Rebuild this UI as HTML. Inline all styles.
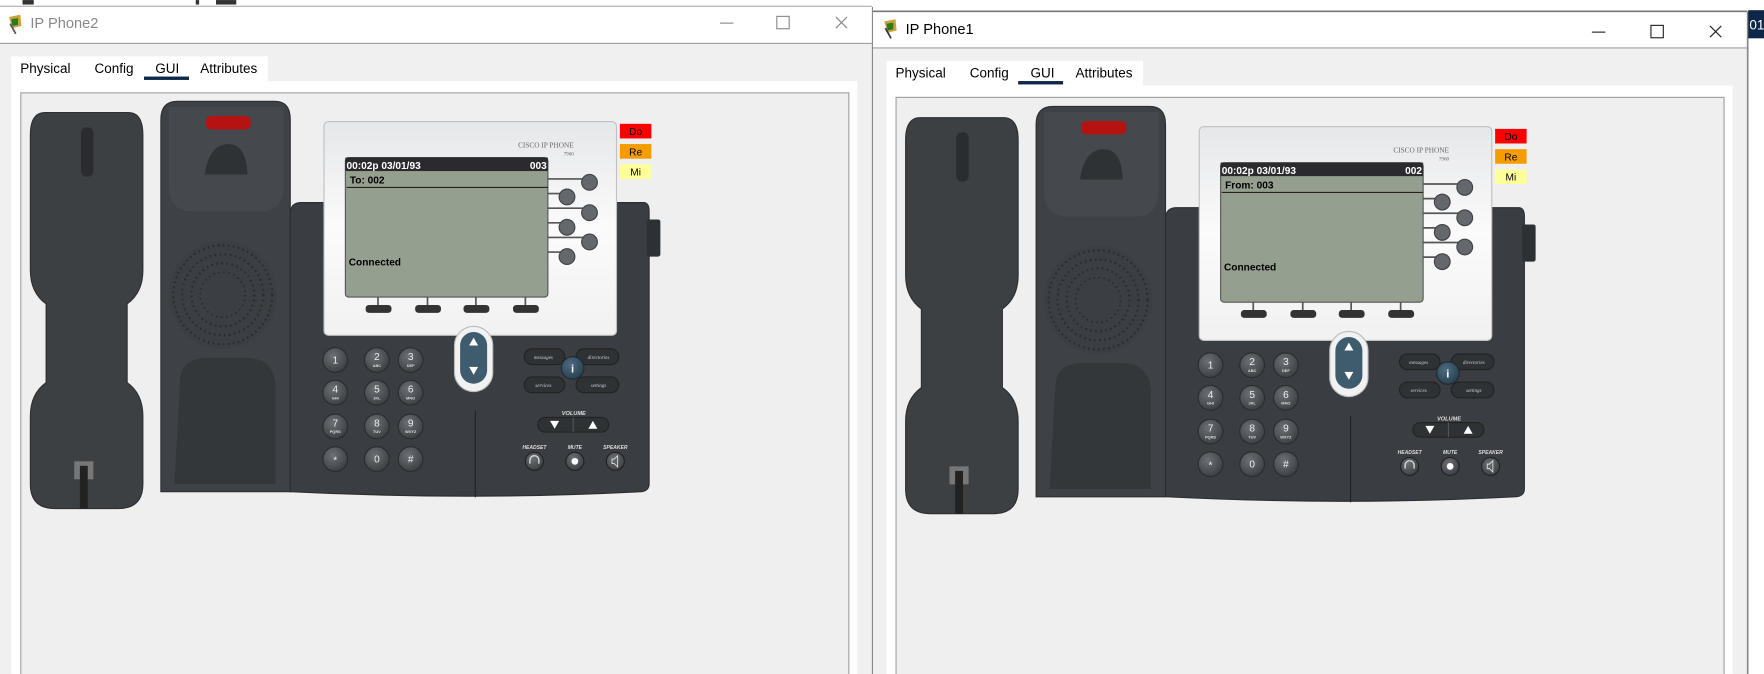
<!DOCTYPE html>
<html><head><meta charset="utf-8"><style>
html,body{margin:0;padding:0;background:#fff;overflow:hidden}
svg{display:block;font-family:"Liberation Sans",sans-serif}
.sf{font-family:"Liberation Serif",serif}
</style></head><body>
<svg width="1764" height="674" viewBox="0 0 1568 599" xmlns="http://www.w3.org/2000/svg">
<defs>
<linearGradient id="bz" x1="0" y1="0" x2="0" y2="1"><stop offset="0" stop-color="#e6e7e9"/><stop offset="0.5" stop-color="#fbfbfb"/><stop offset="1" stop-color="#f1f1f1"/></linearGradient>
<radialGradient id="kb" cx="0.4" cy="0.35" r="0.7"><stop offset="0" stop-color="#6c7075"/><stop offset="1" stop-color="#3a3d41"/></radialGradient>
<radialGradient id="ib" cx="0.4" cy="0.35" r="0.7"><stop offset="0" stop-color="#4d6a80"/><stop offset="1" stop-color="#27404f"/></radialGradient>
</defs>
<rect width="1568" height="599" fill="#fff"/>
<rect x="20" y="0" width="10" height="4" fill="#333"/><rect x="174" y="0" width="3" height="4" fill="#333"/><rect x="192" y="0" width="18" height="4" fill="#333"/>
<line x1="0" y1="5.5" x2="775" y2="5.5" stroke="#999"/>
<!-- LEFT WINDOW -->
<rect x="0" y="6" width="775" height="593" fill="#f0f0f0"/>
<rect x="0" y="6" width="775" height="32" fill="#fff"/>
<line x1="0" y1="38.5" x2="775" y2="38.5" stroke="#a0a0a0"/>
<g transform="translate(6,13)"><path d="M2 2 L12 0 L13 10 L5 12 Z" fill="#c9a23a"/><path d="M4 4 L10 3 L10 9 L5 10Z" fill="#2a7a20"/><path d="M3 8 L8 17" stroke="#555" stroke-width="1.5"/></g>
<text x="27" y="25" font-size="13" fill="#888">IP Phone2</text>
<line x1="640" y1="20.5" x2="652" y2="20.5" stroke="#888"/>
<rect x="690.5" y="14.5" width="11" height="11" fill="none" stroke="#888"/>
<path d="M743 15 L753 25 M753 15 L743 25" stroke="#888" stroke-width="1"/>
<rect x="10" y="50" width="228" height="23" fill="#fff"/>
<rect x="10" y="72" width="752" height="527" fill="#fff"/>
<rect x="18.5" y="82.5" width="736" height="520" fill="#efefef" stroke="#a0a0a0"/>
<g font-size="12" fill="#000"><text x="18" y="65">Physical</text><text x="84" y="65">Config</text><text x="138" y="65">GUI</text><text x="178" y="65">Attributes</text></g>
<rect x="128" y="68" width="40" height="3" fill="#0e2748"/>
<line x1="775.5" y1="6" x2="775.5" y2="599" stroke="#888"/>

<!-- RIGHT WINDOW -->
<rect x="776" y="10" width="777" height="589" fill="#f0f0f0"/>
<line x1="776" y1="10" x2="1553" y2="10" stroke="#777" stroke-width="1.5"/>
<rect x="776" y="11" width="777" height="31" fill="#fff"/>
<line x1="776" y1="42.5" x2="1553" y2="42.5" stroke="#a0a0a0"/>
<g transform="translate(784,17)"><path d="M2 2 L12 0 L13 10 L5 12 Z" fill="#c9a23a"/><path d="M4 4 L10 3 L10 9 L5 10Z" fill="#2a7a20"/><path d="M3 8 L8 17" stroke="#333" stroke-width="1.5"/></g>
<text x="805" y="30" font-size="13" fill="#000">IP Phone1</text>
<line x1="1415" y1="28.5" x2="1427" y2="28.5" stroke="#222"/>
<rect x="1467.5" y="22.5" width="11" height="11" fill="none" stroke="#222"/>
<path d="M1520 23 L1530 33 M1530 23 L1520 33" stroke="#222" stroke-width="1"/>
<rect x="788" y="54" width="228" height="23" fill="#fff"/>
<rect x="788" y="76" width="752" height="523" fill="#fff"/>
<rect x="796.5" y="86.5" width="736" height="520" fill="#efefef" stroke="#a0a0a0"/>
<g font-size="12" fill="#000"><text x="796" y="69">Physical</text><text x="862" y="69">Config</text><text x="916" y="69">GUI</text><text x="956" y="69">Attributes</text></g>
<rect x="905" y="72" width="40" height="3" fill="#0e2748"/>
<line x1="1553.5" y1="10" x2="1553.5" y2="599" stroke="#888" stroke-width="1.5"/>
<rect x="1554" y="9" width="14" height="25" fill="#0e2748"/>
<text x="1555" y="26" font-size="12" fill="#fff">01</text>

<!-- PHONE LEFT -->
<g>
<path d="M40 100 H114 Q127 100 127 120 V240 Q127 260 113 270 V340 Q127 350 127 370 V430 Q127 452 105 452 H49 Q27 452 27 430 V370 Q27 350 41 340 V270 Q27 260 27 240 V120 Q27 100 40 100Z" fill="#3d4043" stroke="#2c2e31"/>
<rect x="72" y="113" width="11" height="44" rx="5" fill="#2a2c2f"/>
<rect x="66" y="410" width="17" height="16" fill="#777"/><rect x="71" y="414" width="7" height="38" fill="#222"/>
<path d="M158 90 H244 Q258 90 258 106 V437 H143 V106 Q143 90 158 90Z" fill="#3e4145" stroke="#2c2e31"/>
<path d="M150 95 H252 V165 Q252 188 230 188 H172 Q150 188 150 165Z" fill="#45484c"/>
<rect x="183" y="103" width="40" height="12" rx="5" fill="#b51212"/>
<path d="M182 155 Q186 128 203 128 Q219 128 220 155 Z" fill="#2f3235"/>
<circle cx="198" cy="262" r="48" fill="#3b3e42"/>
<circle cx="198" cy="262" r="44" fill="none" stroke="#2a2c2f" stroke-width="2" stroke-dasharray="1.5 3"/>
<circle cx="198" cy="262" r="36" fill="none" stroke="#2a2c2f" stroke-width="2" stroke-dasharray="1.5 3"/>
<circle cx="198" cy="262" r="28" fill="none" stroke="#2a2c2f" stroke-width="2" stroke-dasharray="1.5 3"/>
<circle cx="198" cy="262" r="20" fill="none" stroke="#2a2c2f" stroke-width="1.5" stroke-dasharray="1.5 3"/>
<path d="M160 340 Q160 318 185 318 H218 Q245 318 245 345 V430 H155 Z" fill="#34373a"/>
<path d="M268 180 H572 Q577 180 577 188 V430 Q577 436 570 437 Q420 445 258 437 V190 Q258 180 268 180Z" fill="#3a3d41" stroke="#2b2d30"/>
<rect x="575" y="195" width="12" height="33" rx="2" fill="#2e3134"/>
<line x1="422.5" y1="365" x2="422.5" y2="442" stroke="#222"/>
<rect x="288" y="108" width="260" height="190" rx="4" fill="url(#bz)" stroke="#c0c0c0"/>
<text x="510" y="131" font-size="6.5" fill="#666" text-anchor="end" class="sf">CISCO IP PHONE</text>
<text x="510" y="138" font-size="4.5" fill="#666" text-anchor="end" class="sf">7960</text>
<rect x="307" y="140" width="180" height="124" rx="3" fill="#959f90" stroke="#555"/>
<rect x="307" y="140" width="180" height="12" fill="#2b2a2e"/>
<line x1="308" y1="166.5" x2="487" y2="166.5" stroke="#222"/>
<g stroke="#555" stroke-width="1.5">
<line x1="487" y1="159" x2="524" y2="159"/><line x1="487" y1="172" x2="504" y2="172"/><line x1="487" y1="185" x2="524" y2="185"/><line x1="487" y1="198" x2="504" y2="198"/><line x1="487" y1="211" x2="524" y2="211"/><line x1="487" y1="224" x2="504" y2="224"/>
<line x1="336" y1="264" x2="336" y2="274"/><line x1="380" y1="264" x2="380" y2="274"/><line x1="423" y1="264" x2="423" y2="274"/><line x1="467" y1="264" x2="467" y2="274"/>
</g>
<g fill="#64676c" stroke="#404245">
<circle cx="524" cy="162" r="7"/><circle cx="504" cy="175" r="7"/><circle cx="524" cy="189" r="7"/><circle cx="504" cy="202" r="7"/><circle cx="524" cy="215" r="7"/><circle cx="504" cy="228" r="7"/>
</g>
<g fill="#333"><rect x="325" y="271" width="23" height="7" rx="3"/><rect x="369" y="271" width="23" height="7" rx="3"/><rect x="412" y="271" width="23" height="7" rx="3"/><rect x="456" y="271" width="23" height="7" rx="3"/></g>
<rect x="551" y="110" width="28" height="13" fill="#ff0000"/><text x="565" y="120" font-size="9" text-anchor="middle">Do</text>
<rect x="551" y="128" width="28" height="13" fill="#f59c00"/><text x="565" y="138" font-size="9" text-anchor="middle">Re</text>
<rect x="551" y="146" width="28" height="13" fill="#ffff99"/><text x="565" y="156" font-size="9" text-anchor="middle">Mi</text>
<rect x="404" y="290" width="34" height="58" rx="17" fill="#f2f2f2" stroke="#bbb"/>
<rect x="409" y="295" width="24" height="46" rx="12" fill="#3f5b6e"/>
<path d="M421 300 L425 307 H417Z M421 333 L425 326 H417Z" fill="#fff"/>
<g fill="url(#kb)" stroke="#2a2c2f">
<circle cx="298" cy="320" r="11"/><circle cx="335" cy="320" r="11"/><circle cx="365" cy="320" r="11"/>
<circle cx="298" cy="349" r="11"/><circle cx="335" cy="349" r="11"/><circle cx="365" cy="349" r="11"/>
<circle cx="298" cy="379" r="11"/><circle cx="335" cy="379" r="11"/><circle cx="365" cy="379" r="11"/>
<circle cx="298" cy="408" r="11"/><circle cx="335" cy="408" r="11"/><circle cx="365" cy="408" r="11"/>
</g>
<g fill="#eee" font-size="9" text-anchor="middle">
<text x="298" y="323">1</text><text x="335" y="320">2</text><text x="365" y="320">3</text>
<text x="298" y="349">4</text><text x="335" y="349">5</text><text x="365" y="349">6</text>
<text x="298" y="379">7</text><text x="335" y="379">8</text><text x="365" y="379">9</text>
<text x="298" y="412">*</text><text x="335" y="411">0</text><text x="365" y="411">#</text>
</g>
<g fill="#ddd" font-size="3.5" text-anchor="middle" font-weight="bold">
<text x="335" y="326">ABC</text><text x="365" y="326">DEF</text><text x="298" y="355">GHI</text><text x="335" y="355">JKL</text><text x="365" y="355">MNO</text><text x="298" y="385">PQRS</text><text x="335" y="385">TUV</text><text x="365" y="385">WXYZ</text>
</g>
<g fill="#2f3235" stroke="#222"><rect x="466" y="310" width="36" height="14" rx="7"/><rect x="512" y="310" width="38" height="14" rx="7"/><rect x="466" y="335" width="36" height="14" rx="7"/><rect x="512" y="335" width="38" height="14" rx="7"/></g>
<g fill="#ccc" font-size="4.5" font-style="italic" text-anchor="middle" class="sf"><text x="483" y="319">messages</text><text x="532" y="319">directories</text><text x="483" y="344">services</text><text x="532" y="344">settings</text></g>
<circle cx="509" cy="327" r="10" fill="url(#ib)" stroke="#1f2a33"/><text x="509" y="331" font-size="10" fill="#fff" text-anchor="middle" font-weight="bold">i</text>
<text x="510" y="369" font-size="5" fill="#ddd" text-anchor="middle" font-style="italic" font-weight="bold">VOLUME</text>
<rect x="478" y="371" width="63" height="13" rx="6.5" fill="#2f3235" stroke="#222"/><line x1="509.5" y1="371" x2="509.5" y2="384" stroke="#555"/>
<path d="M489 374 L497 374 L493 381Z M523 381 L531 381 L527 374Z" fill="#fff"/>
<g fill="#ddd" font-size="4.5" text-anchor="middle" font-style="italic" font-weight="bold"><text x="475" y="399">HEADSET</text><text x="511" y="399">MUTE</text><text x="547" y="399">SPEAKER</text></g>
<g fill="url(#kb)" stroke="#222"><circle cx="475" cy="410" r="8"/><circle cx="511" cy="410" r="8"/><circle cx="547" cy="410" r="8"/></g>
<circle cx="511" cy="410" r="3" fill="#fff"/>
<path d="M471 412 V409 A4 4 0 0 1 479 409 V412" fill="none" stroke="#ddd" stroke-width="1.2"/>
<path d="M544 408 H546 L549 405 V415 L546 412 H544Z" fill="none" stroke="#ddd" stroke-width="0.8"/>
<g fill="#fff" font-size="9" font-weight="bold">
<text x="308" y="150">00:02p 03/01/93</text><text x="486" y="150" text-anchor="end">003</text>
</g>
<text x="311" y="163" font-size="9" font-weight="bold">To: 002</text>
<text x="310" y="236" font-size="9" font-weight="bold">Connected</text>
</g>

<!-- PHONE RIGHT -->
<g transform="translate(778,4.5)">
<path d="M40 100 H114 Q127 100 127 120 V240 Q127 260 113 270 V340 Q127 350 127 370 V430 Q127 452 105 452 H49 Q27 452 27 430 V370 Q27 350 41 340 V270 Q27 260 27 240 V120 Q27 100 40 100Z" fill="#3d4043" stroke="#2c2e31"/>
<rect x="72" y="113" width="11" height="44" rx="5" fill="#2a2c2f"/>
<rect x="66" y="410" width="17" height="16" fill="#777"/><rect x="71" y="414" width="7" height="38" fill="#222"/>
<path d="M158 90 H244 Q258 90 258 106 V437 H143 V106 Q143 90 158 90Z" fill="#3e4145" stroke="#2c2e31"/>
<path d="M150 95 H252 V165 Q252 188 230 188 H172 Q150 188 150 165Z" fill="#45484c"/>
<rect x="183" y="103" width="40" height="12" rx="5" fill="#b51212"/>
<path d="M182 155 Q186 128 203 128 Q219 128 220 155 Z" fill="#2f3235"/>
<circle cx="198" cy="262" r="48" fill="#3b3e42"/>
<circle cx="198" cy="262" r="44" fill="none" stroke="#2a2c2f" stroke-width="2" stroke-dasharray="1.5 3"/>
<circle cx="198" cy="262" r="36" fill="none" stroke="#2a2c2f" stroke-width="2" stroke-dasharray="1.5 3"/>
<circle cx="198" cy="262" r="28" fill="none" stroke="#2a2c2f" stroke-width="2" stroke-dasharray="1.5 3"/>
<circle cx="198" cy="262" r="20" fill="none" stroke="#2a2c2f" stroke-width="1.5" stroke-dasharray="1.5 3"/>
<path d="M160 340 Q160 318 185 318 H218 Q245 318 245 345 V430 H155 Z" fill="#34373a"/>
<path d="M268 180 H572 Q577 180 577 188 V430 Q577 436 570 437 Q420 445 258 437 V190 Q258 180 268 180Z" fill="#3a3d41" stroke="#2b2d30"/>
<rect x="575" y="195" width="12" height="33" rx="2" fill="#2e3134"/>
<line x1="422.5" y1="365" x2="422.5" y2="442" stroke="#222"/>
<rect x="288" y="108" width="260" height="190" rx="4" fill="url(#bz)" stroke="#c0c0c0"/>
<text x="510" y="131" font-size="6.5" fill="#666" text-anchor="end" class="sf">CISCO IP PHONE</text>
<text x="510" y="138" font-size="4.5" fill="#666" text-anchor="end" class="sf">7960</text>
<rect x="307" y="140" width="180" height="124" rx="3" fill="#959f90" stroke="#555"/>
<rect x="307" y="140" width="180" height="12" fill="#2b2a2e"/>
<line x1="308" y1="166.5" x2="487" y2="166.5" stroke="#222"/>
<g stroke="#555" stroke-width="1.5">
<line x1="487" y1="159" x2="524" y2="159"/><line x1="487" y1="172" x2="504" y2="172"/><line x1="487" y1="185" x2="524" y2="185"/><line x1="487" y1="198" x2="504" y2="198"/><line x1="487" y1="211" x2="524" y2="211"/><line x1="487" y1="224" x2="504" y2="224"/>
<line x1="336" y1="264" x2="336" y2="274"/><line x1="380" y1="264" x2="380" y2="274"/><line x1="423" y1="264" x2="423" y2="274"/><line x1="467" y1="264" x2="467" y2="274"/>
</g>
<g fill="#64676c" stroke="#404245">
<circle cx="524" cy="162" r="7"/><circle cx="504" cy="175" r="7"/><circle cx="524" cy="189" r="7"/><circle cx="504" cy="202" r="7"/><circle cx="524" cy="215" r="7"/><circle cx="504" cy="228" r="7"/>
</g>
<g fill="#333"><rect x="325" y="271" width="23" height="7" rx="3"/><rect x="369" y="271" width="23" height="7" rx="3"/><rect x="412" y="271" width="23" height="7" rx="3"/><rect x="456" y="271" width="23" height="7" rx="3"/></g>
<rect x="551" y="110" width="28" height="13" fill="#ff0000"/><text x="565" y="120" font-size="9" text-anchor="middle">Do</text>
<rect x="551" y="128" width="28" height="13" fill="#f59c00"/><text x="565" y="138" font-size="9" text-anchor="middle">Re</text>
<rect x="551" y="146" width="28" height="13" fill="#ffff99"/><text x="565" y="156" font-size="9" text-anchor="middle">Mi</text>
<rect x="404" y="290" width="34" height="58" rx="17" fill="#f2f2f2" stroke="#bbb"/>
<rect x="409" y="295" width="24" height="46" rx="12" fill="#3f5b6e"/>
<path d="M421 300 L425 307 H417Z M421 333 L425 326 H417Z" fill="#fff"/>
<g fill="url(#kb)" stroke="#2a2c2f">
<circle cx="298" cy="320" r="11"/><circle cx="335" cy="320" r="11"/><circle cx="365" cy="320" r="11"/>
<circle cx="298" cy="349" r="11"/><circle cx="335" cy="349" r="11"/><circle cx="365" cy="349" r="11"/>
<circle cx="298" cy="379" r="11"/><circle cx="335" cy="379" r="11"/><circle cx="365" cy="379" r="11"/>
<circle cx="298" cy="408" r="11"/><circle cx="335" cy="408" r="11"/><circle cx="365" cy="408" r="11"/>
</g>
<g fill="#eee" font-size="9" text-anchor="middle">
<text x="298" y="323">1</text><text x="335" y="320">2</text><text x="365" y="320">3</text>
<text x="298" y="349">4</text><text x="335" y="349">5</text><text x="365" y="349">6</text>
<text x="298" y="379">7</text><text x="335" y="379">8</text><text x="365" y="379">9</text>
<text x="298" y="412">*</text><text x="335" y="411">0</text><text x="365" y="411">#</text>
</g>
<g fill="#ddd" font-size="3.5" text-anchor="middle" font-weight="bold">
<text x="335" y="326">ABC</text><text x="365" y="326">DEF</text><text x="298" y="355">GHI</text><text x="335" y="355">JKL</text><text x="365" y="355">MNO</text><text x="298" y="385">PQRS</text><text x="335" y="385">TUV</text><text x="365" y="385">WXYZ</text>
</g>
<g fill="#2f3235" stroke="#222"><rect x="466" y="310" width="36" height="14" rx="7"/><rect x="512" y="310" width="38" height="14" rx="7"/><rect x="466" y="335" width="36" height="14" rx="7"/><rect x="512" y="335" width="38" height="14" rx="7"/></g>
<g fill="#ccc" font-size="4.5" font-style="italic" text-anchor="middle" class="sf"><text x="483" y="319">messages</text><text x="532" y="319">directories</text><text x="483" y="344">services</text><text x="532" y="344">settings</text></g>
<circle cx="509" cy="327" r="10" fill="url(#ib)" stroke="#1f2a33"/><text x="509" y="331" font-size="10" fill="#fff" text-anchor="middle" font-weight="bold">i</text>
<text x="510" y="369" font-size="5" fill="#ddd" text-anchor="middle" font-style="italic" font-weight="bold">VOLUME</text>
<rect x="478" y="371" width="63" height="13" rx="6.5" fill="#2f3235" stroke="#222"/><line x1="509.5" y1="371" x2="509.5" y2="384" stroke="#555"/>
<path d="M489 374 L497 374 L493 381Z M523 381 L531 381 L527 374Z" fill="#fff"/>
<g fill="#ddd" font-size="4.5" text-anchor="middle" font-style="italic" font-weight="bold"><text x="475" y="399">HEADSET</text><text x="511" y="399">MUTE</text><text x="547" y="399">SPEAKER</text></g>
<g fill="url(#kb)" stroke="#222"><circle cx="475" cy="410" r="8"/><circle cx="511" cy="410" r="8"/><circle cx="547" cy="410" r="8"/></g>
<circle cx="511" cy="410" r="3" fill="#fff"/>
<path d="M471 412 V409 A4 4 0 0 1 479 409 V412" fill="none" stroke="#ddd" stroke-width="1.2"/>
<path d="M544 408 H546 L549 405 V415 L546 412 H544Z" fill="none" stroke="#ddd" stroke-width="0.8"/>
<g fill="#fff" font-size="9" font-weight="bold">
<text x="308" y="150">00:02p 03/01/93</text><text x="486" y="150" text-anchor="end">002</text>
</g>
<text x="311" y="163" font-size="9" font-weight="bold">From: 003</text>
<text x="310" y="236" font-size="9" font-weight="bold">Connected</text>
</g>
</svg>
</body></html>
